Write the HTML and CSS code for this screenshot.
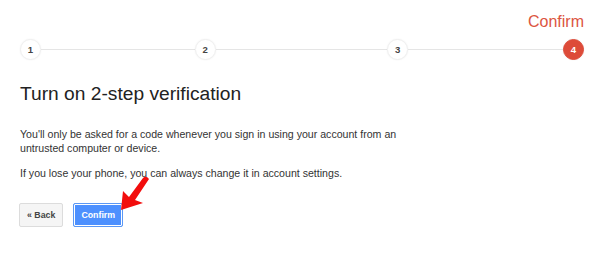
FILE: index.html
```html
<!DOCTYPE html>
<html>
<head>
<meta charset="utf-8">
<link rel="stylesheet" href="styles.css">
</head>
<body>
<div class="page">
  <div class="step-label">Confirm</div>
  <div class="steps">
    <span class="dot">1</span>
    <span class="line l1"></span>
    <span class="dot">2</span>
    <span class="line l2"></span>
    <span class="dot">3</span>
    <span class="line l3"></span>
    <span class="dot active">4</span>
  </div>
  <h1 class="title">Turn on 2-step verification</h1>
  <p class="text">You'll only be asked for a code whenever you sign in using your account from an untrusted computer or device.</p>
  <p class="text">If you lose your phone, you can always change it in account settings.</p>
  <div class="actions">
    <button class="btn btn-back">« Back</button>
    <button class="btn btn-confirm">Confirm</button>
  </div>
</div>
<svg class="arrow" width="600" height="255" viewBox="0 0 600 255">
  <path d="M121 210 L123 191 L129 197 L143 178 Q146 175 149 179 L135 200 L143 203 Z" fill="#f20d0d"/>
</svg>
</body>
</html>
```

FILE: styles.css
```css
html, body {
  margin: 0;
  padding: 0;
  background: #fff;
}
body {
  position: relative;
  width: 600px;
  height: 255px;
  overflow: hidden;
  font-family: "Liberation Sans", Arial, sans-serif;
  color: #222;
}
.page {
  padding: 13px 16px 0 20px;
}
.step-label {
  width: 564px;
  text-align: right;
  font-size: 16px;
  line-height: 18px;
  color: #dc5541;
}
.steps {
  width: 564px;
  height: 20px;
  margin-top: 8px;
  display: flex;
  align-items: center;
}
.dot {
  flex: none;
  width: 19px;
  height: 19px;
  border-radius: 50%;
  border: 1px solid #f0f0f0;
  box-shadow: 0 0 2px rgba(0,0,0,0.06);
  background: #fff;
  display: flex;
  align-items: center;
  justify-content: center;
  font-size: 9.6px;
  font-weight: bold;
  color: #444;
}
.dot.active {
  background: #dd4b39;
  border-color: #dd4b39;
  color: #fff;
}
.line {
  height: 1px;
  background: #e5e5e5;
}
.l1 { flex: 155 1 0; }
.l2 { flex: 173 1 0; }
.l3 { flex: 156 1 0; }
.title {
  margin: 23px 0 0 0;
  font-size: 19.2px;
  line-height: 24px;
  font-weight: normal;
  color: #222;
}
.text {
  margin: 0;
  max-width: 400px;
  font-size: 10.6px;
  line-height: 14px;
  color: #333;
}
.title + .text {
  margin-top: 21px;
}
.text + .text {
  margin-top: 11px;
}
.actions {
  margin-top: 23px;
  margin-left: -1px;
  display: flex;
  gap: 10px;
}
.btn {
  height: 24px;
  padding: 0 7px;
  margin: 0;
  border-radius: 2px;
  font-family: "Liberation Sans", Arial, sans-serif;
  font-size: 8.8px;
  font-weight: bold;
  line-height: 22px;
  cursor: pointer;
}
.btn-back {
  background: #f5f5f5;
  border: 1px solid #dcdcdc;
  color: #444;
}
.btn-confirm {
  background: #4d90fe;
  border: 1px solid #5b98f5;
  box-shadow: inset 0 0 0 1px #fff;
  color: #fff;
  padding: 0 7px;
}
.arrow {
  position: absolute;
  left: 0;
  top: 0;
  pointer-events: none;
}
```
